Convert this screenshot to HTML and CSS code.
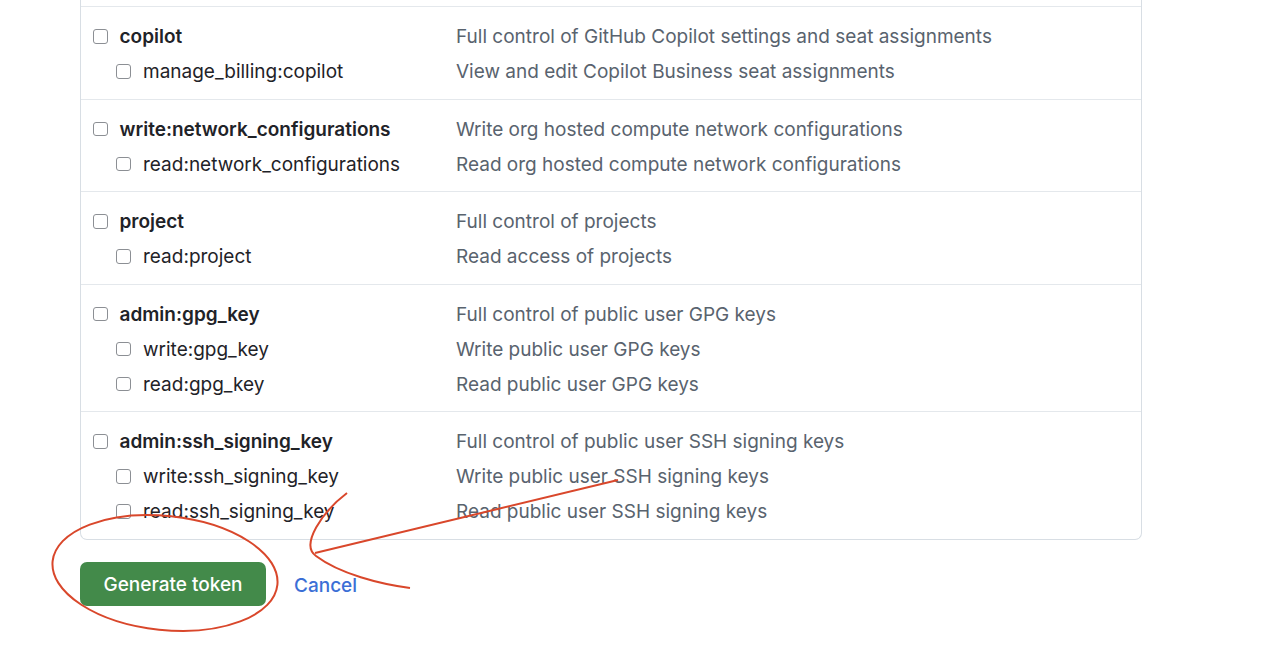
FILE: index.html
```html
<!DOCTYPE html>
<html lang="en">
<head>
  <meta charset="UTF-8">
  <meta name="viewport" content="width=device-width, initial-scale=1.0">
  <title>New personal access token</title>
  <link rel="stylesheet" href="styles.css">
</head>
<body>
  <div class="page">
    <div class="scopes">
      <div class="scope-group cut"></div>

      <div class="scope-group">
        <label class="scope parent"><span class="name"><span class="box"></span>copilot</span><span class="desc">Full control of GitHub Copilot settings and seat assignments</span></label>
        <label class="scope child"><span class="name"><span class="box"></span>manage_billing:copilot</span><span class="desc">View and edit Copilot Business seat assignments</span></label>
      </div>

      <div class="scope-group">
        <label class="scope parent"><span class="name"><span class="box"></span>write:network_configurations</span><span class="desc">Write org hosted compute network configurations</span></label>
        <label class="scope child"><span class="name"><span class="box"></span>read:network_configurations</span><span class="desc">Read org hosted compute network configurations</span></label>
      </div>

      <div class="scope-group">
        <label class="scope parent"><span class="name"><span class="box"></span>project</span><span class="desc">Full control of projects</span></label>
        <label class="scope child"><span class="name"><span class="box"></span>read:project</span><span class="desc">Read access of projects</span></label>
      </div>

      <div class="scope-group">
        <label class="scope parent"><span class="name"><span class="box"></span>admin:gpg_key</span><span class="desc">Full control of public user GPG keys</span></label>
        <label class="scope child"><span class="name"><span class="box"></span>write:gpg_key</span><span class="desc">Write public user GPG keys</span></label>
        <label class="scope child"><span class="name"><span class="box"></span>read:gpg_key</span><span class="desc">Read public user GPG keys</span></label>
      </div>

      <div class="scope-group">
        <label class="scope parent"><span class="name"><span class="box"></span>admin:ssh_signing_key</span><span class="desc">Full control of public user SSH signing keys</span></label>
        <label class="scope child"><span class="name"><span class="box"></span>write:ssh_signing_key</span><span class="desc">Write public user SSH signing keys</span></label>
        <label class="scope child"><span class="name"><span class="box"></span>read:ssh_signing_key</span><span class="desc">Read public user SSH signing keys</span></label>
      </div>
    </div>

    <div class="actions">
      <button class="btn-primary" type="button">Generate token</button>
      <a class="cancel" href="#">Cancel</a>
    </div>
  </div>

  <!-- hand drawn markup on top of the screenshot -->
  <svg class="marks" width="1280" height="645" viewBox="0 0 1280 645">
    <ellipse cx="165" cy="573" rx="113" ry="57" transform="rotate(6 165 573)"/>
    <path d="M618 480 L315 553"/>
    <path d="M347 493 C 322 512, 300 545, 316 556 C 340 574, 380 584, 410 588"/>
  </svg>
</body>
</html>
```

FILE: styles.css
```css
body {
  margin: 0;
  padding: 0;
  background: #fff;
  font-family: Inter, "Liberation Sans", sans-serif;
  font-size: 19px;
  color: #1f2328;
}

.page {
  padding-left: 80px;
}

.scopes {
  width: 1060px;
  border: 1px solid #d8dee4;
  border-top: none;
  border-radius: 0 0 7px 7px;
}

.scope-group {
  padding: 12px 0 9.5px 12px;
  border-top: 1px solid #e4e8ec;
}

.scope-group.cut {
  height: 6px;
  padding: 0;
  border-top: none;
}

.scope {
  display: flex;
  align-items: center;
  height: 35px;
}

.scope .name {
  display: flex;
  align-items: center;
  width: 363px;
  flex-shrink: 0;
}

.scope.child .name {
  padding-left: 22px;
  width: 341px;
}

.parent .name {
  font-weight: 600;
}

.box {
  width: 12.5px;
  height: 12.5px;
  border: 1.5px solid #8c8f94;
  border-radius: 3px;
  margin-right: 12px;
  flex-shrink: 0;
}

.child .box {
  margin-left: 1px;
  margin-right: 12.5px;
}

.desc {
  color: #59636e;
}

.actions {
  display: flex;
  align-items: center;
  gap: 28px;
  margin-top: 22px;
}

.btn-primary {
  width: 186px;
  height: 44px;
  border: none;
  border-radius: 7px;
  background: #438a4a;
  color: #fff;
  font-family: inherit;
  font-size: 19px;
  font-weight: 500;
  padding-top: 3px;
  cursor: pointer;
}

.cancel {
  color: #3b6fd6;
  font-weight: 500;
  text-decoration: none;
  padding-top: 3px;
}

.marks {
  position: absolute;
  top: 0;
  left: 0;
  pointer-events: none;
  fill: none;
  stroke: #d9472b;
  stroke-width: 2;
}
```
